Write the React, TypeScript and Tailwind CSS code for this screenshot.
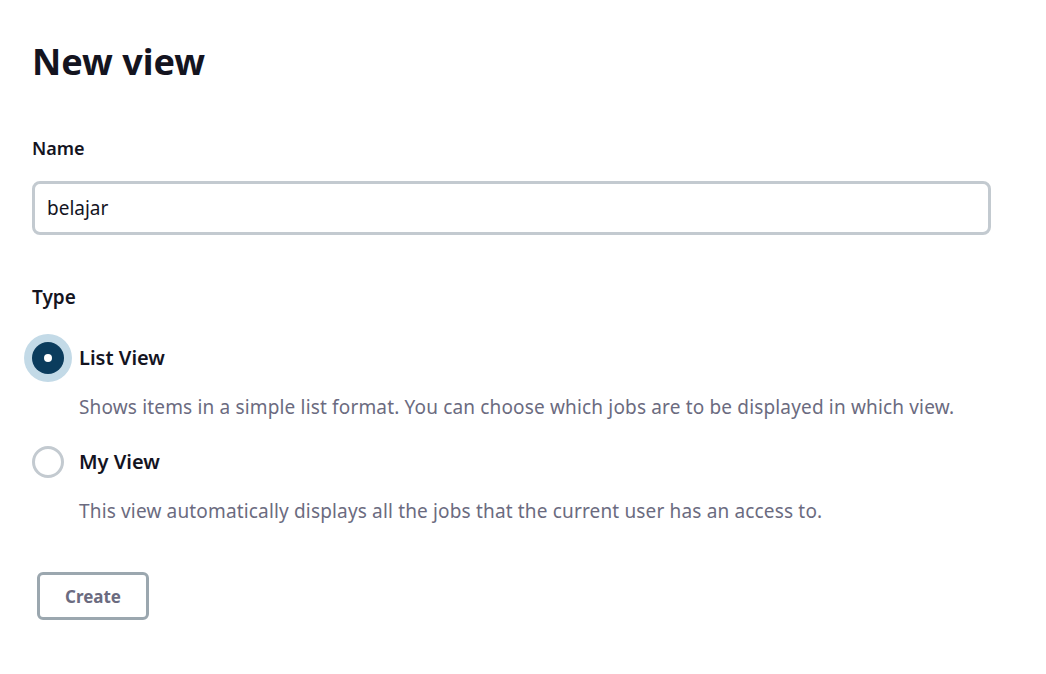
import { useState } from "react";

const NewView = () => {
  const [name, setName] = useState("belajar");
  const [type, setType] = useState("list");

  const options = [
    {
      id: "list",
      label: "List View",
      desc: "Shows items in a simple list format. You can choose which jobs are to be displayed in which view.",
    },
    {
      id: "my",
      label: "My View",
      desc: "This view automatically displays all the jobs that the current user has an access to.",
    },
  ];

  return (
    <div className="min-h-screen bg-white px-8 pt-[40px] text-[#14141f] font-['Noto_Sans',sans-serif]">
      {/* Title */}
      <h1 className="text-[36px] font-bold leading-[44px]">New view</h1>

      {/* Name */}
      <label className="mt-[52px] block text-[18px] font-semibold leading-[24px]">Name</label>
      <input
        value={name}
        onChange={(e) => setName(e.target.value)}
        className="mt-[21px] block h-[54px] w-[959px] rounded-lg border-[3px] border-[#c3cad0] bg-white px-[12px] text-[19px] outline-none"
      />

      {/* Type */}
      <div className="mt-[50px] text-[19px] font-semibold leading-[24px]">Type</div>
      <div className="mt-[33px] flex flex-col">
        {options.map((o, i) => (
          <div key={o.id} className={i > 0 ? "mt-[26px]" : ""}>
            <button onClick={() => setType(o.id)} className="flex items-center gap-[15px]">
              {type === o.id ? (
                <span className="flex h-8 w-8 items-center justify-center rounded-full bg-[#0b3c5d] ring-8 ring-[#c3dae7]">
                  <span className="h-2 w-2 rounded-full bg-white" />
                </span>
              ) : (
                <span className="h-8 w-8 rounded-full border-[3px] border-[#c3cad0] bg-white" />
              )}
              <span className="text-[20px] font-semibold leading-[24px]">{o.label}</span>
            </button>
            <p className="mt-[20px] pl-[47px] text-[19px] leading-[26px] tracking-[0.16px] text-[#6b6b80]">{o.desc}</p>
          </div>
        ))}
      </div>

      {/* Create */}
      <button className="mt-[48px] ml-[5px] h-12 w-[112px] rounded-md border-[3px] border-[#9ba7af] bg-white pt-[2px] text-[17px] font-bold text-[#6b6b80]">
        Create
      </button>
    </div>
  );
};

export default function App() {
  return <NewView />;
}
